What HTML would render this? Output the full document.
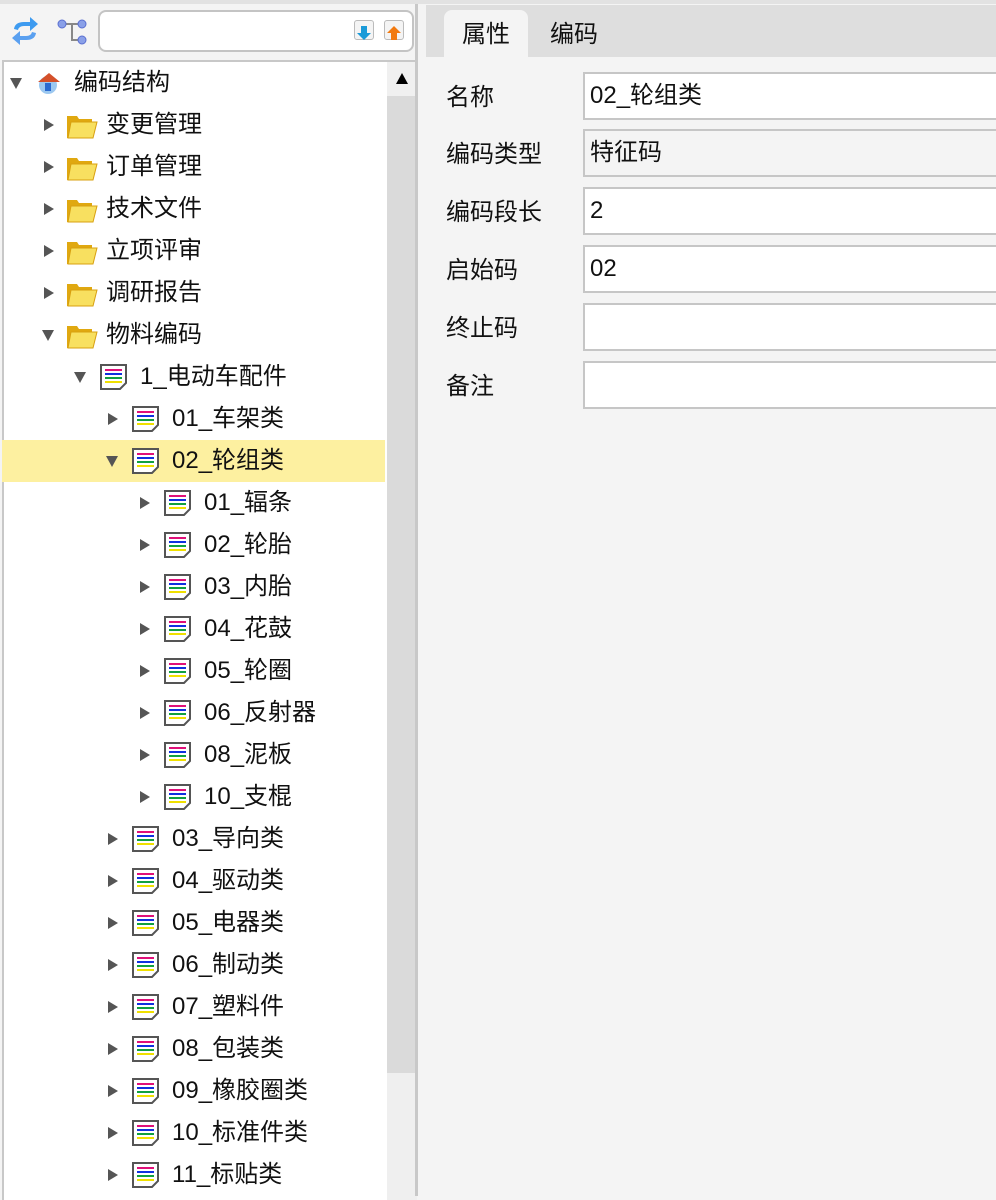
<!DOCTYPE html>
<html><head><meta charset="utf-8">
<style>
*{margin:0;padding:0;box-sizing:border-box}
body{width:996px;height:1196px;overflow:hidden;background:#f4f4f4;font-family:"Liberation Sans","Noto Sans CJK SC",sans-serif;font-size:24px;color:#111;position:relative}
.topline{position:absolute;left:0;top:0;width:996px;height:4px;background:#e2e2e2}
.left{position:absolute;left:0;top:4px;width:415px;height:1192px;background:#f4f4f4}
.search{position:absolute;left:98px;top:6px;width:316px;height:42px;border:2px solid #c4c4c4;border-radius:8px;background:#fff}
.btn{position:absolute;top:8px;width:20px;height:20px;border:1px solid #bbb;border-radius:3px;background:#f4f4f4}
.tree{position:absolute;left:2px;top:56px;width:413px;height:1140px;background:#fff;border-top:2px solid #c8c8c8;border-left:2px solid #c8c8c8}
.sb{position:absolute;left:383px;top:0;width:30px;height:1138px;background:#efefef}
.sbtop{position:absolute;left:0;top:0;width:30px;height:34px;background:#f0f0f0}
.thumb{position:absolute;left:0;top:34px;width:30px;height:977px;background:#dadada}
.row{position:absolute;left:0;width:383px;height:42px;line-height:42px;white-space:nowrap}
.row.sel{background:#fdf0a0}
.arr{position:absolute;top:0;width:12px;height:42px}
.ic{position:absolute;top:8px}
.tx{position:absolute;top:0}
.vl{position:absolute;left:415px;top:4px;width:3px;height:1192px;background:#c8c8c8}
.tabs{position:absolute;left:426px;top:5px;width:570px;height:52px;background:#dedede}
.tab{position:absolute;top:5px;height:47px;line-height:50px;padding:0 18px;white-space:nowrap}
.tab.on{left:18px;background:#f4f4f4;border-radius:8px 8px 0 0}
.lab{position:absolute;left:446px}
.inp{position:absolute;left:583px;width:420px;height:48px;border:2px solid #c6c6c6;background:#fff;line-height:44px;padding-left:5px}
</style></head><body>
<div class="topline"></div>
<div class="left">
 <svg style="position:absolute;left:10px;top:10px" width="30" height="34" viewBox="0 0 30 34">
  <path d="M4 15 Q5 8 14 8 L20 8 L20 3 L28 10 L20 17 L20 12 L14 12 Q9 12 8 16 Z" fill="#3e9bf0"/>
  <path d="M26 19 Q25 26 16 26 L10 26 L10 31 L2 24 L10 17 L10 22 L16 22 Q21 22 22 18 Z" fill="#5aa0f0"/>
 </svg>
 <svg style="position:absolute;left:56px;top:14px" width="34" height="30" viewBox="0 0 34 30">
  <path d="M7 6 H25 M16 6 V22 H25" stroke="#888" stroke-width="2" fill="none"/>
  <circle cx="6" cy="6" r="4" fill="#8aa0e8" stroke="#5a6fd0"/>
  <circle cx="26" cy="6" r="4" fill="#8aa0e8" stroke="#5a6fd0"/>
  <circle cx="26" cy="22" r="4" fill="#8aa0e8" stroke="#5a6fd0"/>
 </svg>
 <div class="search">
  <div class="btn" style="left:254px"><svg width="18" height="18" viewBox="0 0 18 18"><path d="M6 2H12V9H16L9 16L2 9H6Z" fill="#1a9ad8"/></svg></div>
  <div class="btn" style="left:284px"><svg width="18" height="18" viewBox="0 0 18 18"><path d="M6 16H12V9H16L9 2L2 9H6Z" fill="#f27a10"/></svg></div>
 </div>
 <div class="tree">
  <div class="sb"><div class="sbtop"><svg width="30" height="34" viewBox="0 0 30 34"><path d="M9 22L15 11L21 22Z" fill="#000"/></svg></div><div class="thumb"></div></div>
 </div>
</div>
<div class="vl"></div>
<div class="tabs"><div class="tab on">属性</div><div class="tab" style="left:106px">编码</div></div>
<div class="lab" style="top:78px;line-height:40px">名称</div>
<div class="inp" style="top:72px">02_轮组类</div>
<div class="lab" style="top:135px;line-height:40px">编码类型</div>
<div class="inp" style="top:129px;background:#f4f4f4">特征码</div>
<div class="lab" style="top:193px;line-height:40px">编码段长</div>
<div class="inp" style="top:187px">2</div>
<div class="lab" style="top:251px;line-height:40px">启始码</div>
<div class="inp" style="top:245px">02</div>
<div class="lab" style="top:309px;line-height:40px">终止码</div>
<div class="inp" style="top:303px"></div>
<div class="lab" style="top:367px;line-height:40px">备注</div>
<div class="inp" style="top:361px"></div>

<svg width="0" height="0" style="position:absolute">
 <defs>
  <symbol id="fold" viewBox="0 0 32 28"><path d="M1 4H11L13 7H26V26H1Z" fill="#e0a810"/><path d="M5 10H31L27 26H2Z" fill="#f8e060" stroke="#d8a010"/></symbol>
  <symbol id="list" viewBox="0 0 28 26"><path d="M1 1H26V19L20 25H1Z" fill="#fff" stroke="#555" stroke-width="2"/><rect x="5" y="5" width="17" height="2" fill="#e0107a"/><rect x="5" y="9" width="17" height="2" fill="#1030e0"/><rect x="5" y="13" width="17" height="2" fill="#10a040"/><rect x="5" y="17" width="17" height="2" fill="#f0e000"/></symbol>
 </defs>
</svg>
<div style="position:absolute;left:2px;top:62px;width:383px">
 <div class="row" style="top:0"><svg class="arr" style="left:8px" viewBox="0 0 12 42"><path d="M0 16H12L6 27Z" fill="#555"/></svg>
   <svg class="ic" style="left:34px" width="26" height="26" viewBox="0 0 26 26"><circle cx="12" cy="15" r="9" fill="#9cc8f0"/><path d="M2 12L13 3L24 12Z" fill="#d4502a"/><rect x="9" y="13" width="6" height="8" fill="#2a6ad0"/></svg>
   <span class="tx" style="left:72px">编码结构</span></div>
 <div class="row" style="top:42px"><svg class="arr" style="left:40px" viewBox="0 0 12 42"><path d="M2 15L12 21L2 27Z" fill="#555"/></svg><svg class="ic" style="left:64px" width="32" height="28"><use href="#fold"/></svg><span class="tx" style="left:104px">变更管理</span></div>
 <div class="row" style="top:84px"><svg class="arr" style="left:40px" viewBox="0 0 12 42"><path d="M2 15L12 21L2 27Z" fill="#555"/></svg><svg class="ic" style="left:64px" width="32" height="28"><use href="#fold"/></svg><span class="tx" style="left:104px">订单管理</span></div>
 <div class="row" style="top:126px"><svg class="arr" style="left:40px" viewBox="0 0 12 42"><path d="M2 15L12 21L2 27Z" fill="#555"/></svg><svg class="ic" style="left:64px" width="32" height="28"><use href="#fold"/></svg><span class="tx" style="left:104px">技术文件</span></div>
 <div class="row" style="top:168px"><svg class="arr" style="left:40px" viewBox="0 0 12 42"><path d="M2 15L12 21L2 27Z" fill="#555"/></svg><svg class="ic" style="left:64px" width="32" height="28"><use href="#fold"/></svg><span class="tx" style="left:104px">立项评审</span></div>
 <div class="row" style="top:210px"><svg class="arr" style="left:40px" viewBox="0 0 12 42"><path d="M2 15L12 21L2 27Z" fill="#555"/></svg><svg class="ic" style="left:64px" width="32" height="28"><use href="#fold"/></svg><span class="tx" style="left:104px">调研报告</span></div>
 <div class="row" style="top:252px"><svg class="arr" style="left:40px" viewBox="0 0 12 42"><path d="M0 16H12L6 27Z" fill="#555"/></svg><svg class="ic" style="left:64px" width="32" height="28"><use href="#fold"/></svg><span class="tx" style="left:104px">物料编码</span></div>
 <div class="row" style="top:294px"><svg class="arr" style="left:72px" viewBox="0 0 12 42"><path d="M0 16H12L6 27Z" fill="#555"/></svg><svg class="ic" style="left:98px" width="28" height="26"><use href="#list"/></svg><span class="tx" style="left:138px">1_电动车配件</span></div>
 <div class="row" style="top:336px"><svg class="arr" style="left:104px" viewBox="0 0 12 42"><path d="M2 15L12 21L2 27Z" fill="#555"/></svg><svg class="ic" style="left:130px" width="28" height="26"><use href="#list"/></svg><span class="tx" style="left:170px">01_车架类</span></div>
 <div class="row sel" style="top:378px"><svg class="arr" style="left:104px" viewBox="0 0 12 42"><path d="M0 16H12L6 27Z" fill="#555"/></svg><svg class="ic" style="left:130px" width="28" height="26"><use href="#list"/></svg><span class="tx" style="left:170px">02_轮组类</span></div>
 <div class="row" style="top:420px"><svg class="arr" style="left:136px" viewBox="0 0 12 42"><path d="M2 15L12 21L2 27Z" fill="#555"/></svg><svg class="ic" style="left:162px" width="28" height="26"><use href="#list"/></svg><span class="tx" style="left:202px">01_辐条</span></div>
 <div class="row" style="top:462px"><svg class="arr" style="left:136px" viewBox="0 0 12 42"><path d="M2 15L12 21L2 27Z" fill="#555"/></svg><svg class="ic" style="left:162px" width="28" height="26"><use href="#list"/></svg><span class="tx" style="left:202px">02_轮胎</span></div>
 <div class="row" style="top:504px"><svg class="arr" style="left:136px" viewBox="0 0 12 42"><path d="M2 15L12 21L2 27Z" fill="#555"/></svg><svg class="ic" style="left:162px" width="28" height="26"><use href="#list"/></svg><span class="tx" style="left:202px">03_内胎</span></div>
 <div class="row" style="top:546px"><svg class="arr" style="left:136px" viewBox="0 0 12 42"><path d="M2 15L12 21L2 27Z" fill="#555"/></svg><svg class="ic" style="left:162px" width="28" height="26"><use href="#list"/></svg><span class="tx" style="left:202px">04_花鼓</span></div>
 <div class="row" style="top:588px"><svg class="arr" style="left:136px" viewBox="0 0 12 42"><path d="M2 15L12 21L2 27Z" fill="#555"/></svg><svg class="ic" style="left:162px" width="28" height="26"><use href="#list"/></svg><span class="tx" style="left:202px">05_轮圈</span></div>
 <div class="row" style="top:630px"><svg class="arr" style="left:136px" viewBox="0 0 12 42"><path d="M2 15L12 21L2 27Z" fill="#555"/></svg><svg class="ic" style="left:162px" width="28" height="26"><use href="#list"/></svg><span class="tx" style="left:202px">06_反射器</span></div>
 <div class="row" style="top:672px"><svg class="arr" style="left:136px" viewBox="0 0 12 42"><path d="M2 15L12 21L2 27Z" fill="#555"/></svg><svg class="ic" style="left:162px" width="28" height="26"><use href="#list"/></svg><span class="tx" style="left:202px">08_泥板</span></div>
 <div class="row" style="top:714px"><svg class="arr" style="left:136px" viewBox="0 0 12 42"><path d="M2 15L12 21L2 27Z" fill="#555"/></svg><svg class="ic" style="left:162px" width="28" height="26"><use href="#list"/></svg><span class="tx" style="left:202px">10_支棍</span></div>
 <div class="row" style="top:756px"><svg class="arr" style="left:104px" viewBox="0 0 12 42"><path d="M2 15L12 21L2 27Z" fill="#555"/></svg><svg class="ic" style="left:130px" width="28" height="26"><use href="#list"/></svg><span class="tx" style="left:170px">03_导向类</span></div>
 <div class="row" style="top:798px"><svg class="arr" style="left:104px" viewBox="0 0 12 42"><path d="M2 15L12 21L2 27Z" fill="#555"/></svg><svg class="ic" style="left:130px" width="28" height="26"><use href="#list"/></svg><span class="tx" style="left:170px">04_驱动类</span></div>
 <div class="row" style="top:840px"><svg class="arr" style="left:104px" viewBox="0 0 12 42"><path d="M2 15L12 21L2 27Z" fill="#555"/></svg><svg class="ic" style="left:130px" width="28" height="26"><use href="#list"/></svg><span class="tx" style="left:170px">05_电器类</span></div>
 <div class="row" style="top:882px"><svg class="arr" style="left:104px" viewBox="0 0 12 42"><path d="M2 15L12 21L2 27Z" fill="#555"/></svg><svg class="ic" style="left:130px" width="28" height="26"><use href="#list"/></svg><span class="tx" style="left:170px">06_制动类</span></div>
 <div class="row" style="top:924px"><svg class="arr" style="left:104px" viewBox="0 0 12 42"><path d="M2 15L12 21L2 27Z" fill="#555"/></svg><svg class="ic" style="left:130px" width="28" height="26"><use href="#list"/></svg><span class="tx" style="left:170px">07_塑料件</span></div>
 <div class="row" style="top:966px"><svg class="arr" style="left:104px" viewBox="0 0 12 42"><path d="M2 15L12 21L2 27Z" fill="#555"/></svg><svg class="ic" style="left:130px" width="28" height="26"><use href="#list"/></svg><span class="tx" style="left:170px">08_包装类</span></div>
 <div class="row" style="top:1008px"><svg class="arr" style="left:104px" viewBox="0 0 12 42"><path d="M2 15L12 21L2 27Z" fill="#555"/></svg><svg class="ic" style="left:130px" width="28" height="26"><use href="#list"/></svg><span class="tx" style="left:170px">09_橡胶圈类</span></div>
 <div class="row" style="top:1050px"><svg class="arr" style="left:104px" viewBox="0 0 12 42"><path d="M2 15L12 21L2 27Z" fill="#555"/></svg><svg class="ic" style="left:130px" width="28" height="26"><use href="#list"/></svg><span class="tx" style="left:170px">10_标准件类</span></div>
 <div class="row" style="top:1092px"><svg class="arr" style="left:104px" viewBox="0 0 12 42"><path d="M2 15L12 21L2 27Z" fill="#555"/></svg><svg class="ic" style="left:130px" width="28" height="26"><use href="#list"/></svg><span class="tx" style="left:170px">11_标贴类</span></div>
</div>
</body></html>
